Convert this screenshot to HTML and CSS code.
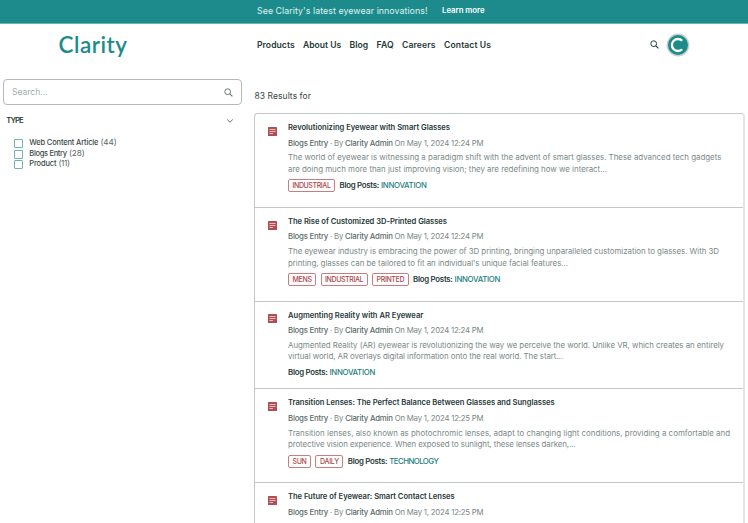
FILE: index.html
```html
<!DOCTYPE html>
<html lang="en">
<head>
<meta charset="utf-8">
<title>Clarity</title>
<link rel="stylesheet" href="styles.css">
</head>
<body>
<svg class="defs" width="0" height="0">
  <symbol id="search" viewBox="0 0 10 10"><circle cx="4.1" cy="4.1" r="3.2" fill="none" stroke="currentColor" stroke-width="1.1"/><path d="M6.4 6.4 9.4 9.4" fill="none" stroke="currentColor" stroke-width="1.2"/></symbol>
  <symbol id="entry" viewBox="0 0 9 9"><rect width="9" height="9" rx=".6" fill="#b04f53"/><path d="M1.5 2.5h6M1.5 4.5h6M1.5 6.5h3.5" stroke="#f3dcdd" stroke-width=".8"/></symbol>
</svg>
<div class="banner"><span data-w="170.5">See Clarity's latest eyewear innovations!</span><a class="more" data-w="42.5">Learn more</a></div>
<header class="header">
  <div class="logo"><span data-w="69">Clarity</span></div>
  <nav class="nav"><a data-w="37.7">Products</a><a data-w="38">About Us</a><a data-w="18.7">Blog</a><a data-w="17">FAQ</a><a data-w="33.7">Careers</a><a data-w="47">Contact Us</a></nav>
  <svg class="find"><use href="#search"/></svg>
  <svg class="avatar" viewBox="0 0 24 24"><circle cx="12" cy="12" r="11.4" fill="#c9cdcd"/><circle cx="12" cy="12" r="10" fill="#1d8b8b"/><path d="M16.2 7.8A6 6 0 1 0 16.2 16.2" fill="none" stroke="#fff" stroke-width="2.3"/></svg>
</header>
<main class="page">
  <aside class="side">
    <div class="search"><span data-w="35.5">Search...</span><svg><use href="#search"/></svg></div>
    <div class="facet"><span data-w="16.5">TYPE</span><svg viewBox="0 0 8 6"><path d="M1.2 1.5 4 4.2 6.8 1.5" fill="none" stroke="#526060" stroke-width=".9"/></svg></div>
    <ul class="options">
      <li><i></i><b data-w="69">Web Content Article</b><span data-w="16">(44)</span></li>
      <li><i></i><b data-w="37.5">Blogs Entry</b><span data-w="15.5">(28)</span></li>
      <li><i></i><b data-w="27">Product</b><span data-w="11">(11)</span></li>
    </ul>
  </aside>
  <section class="results">
    <div class="count"><span data-w="56.5">83 Results for</span></div>
    <div class="list">
      <article class="item">
        <svg class="icon"><use href="#entry"/></svg>
        <div>
          <h2><span data-w="162">Revolutionizing Eyewear with Smart Glasses</span></h2>
          <p class="meta"><span data-w="195.3"><b>Blogs Entry</b> · By <b>Clarity Admin</b> On May 1, 2024 12:24 PM</span></p>
          <p class="text"><span data-w="433.3">The world of eyewear is witnessing a paradigm shift with the advent of smart glasses. These advanced tech gadgets</span><br><span data-w="319">are doing much more than just improving vision; they are redefining how we interact...</span></p>
          <div class="tags"><a class="tag"><span data-w="38">INDUSTRIAL</span></a><span class="cat"><span data-w="39.5">Blog Posts:</span><a data-w="45.5">INNOVATION</a></span></div>
        </div>
      </article>
      <article class="item">
        <svg class="icon"><use href="#entry"/></svg>
        <div>
          <h2><span data-w="159">The Rise of Customized 3D-Printed Glasses</span></h2>
          <p class="meta"><span data-w="195.3"><b>Blogs Entry</b> · By <b>Clarity Admin</b> On May 1, 2024 12:24 PM</span></p>
          <p class="text"><span data-w="431">The eyewear industry is embracing the power of 3D printing, bringing unparalleled customization to glasses. With 3D</span><br><span data-w="280">printing, glasses can be tailored to fit an individual's unique facial features...</span></p>
          <div class="tags"><a class="tag"><span data-w="19.1">MENS</span></a><a class="tag"><span data-w="38">INDUSTRIAL</span></a><a class="tag"><span data-w="27.5">PRINTED</span></a><span class="cat"><span data-w="39.5">Blog Posts:</span><a data-w="45.5">INNOVATION</a></span></div>
        </div>
      </article>
      <article class="item plain">
        <svg class="icon"><use href="#entry"/></svg>
        <div>
          <h2><span data-w="135.3">Augmenting Reality with AR Eyewear</span></h2>
          <p class="meta"><span data-w="195.3"><b>Blogs Entry</b> · By <b>Clarity Admin</b> On May 1, 2024 12:24 PM</span></p>
          <p class="text"><span data-w="436">Augmented Reality (AR) eyewear is revolutionizing the way we perceive the world. Unlike VR, which creates an entirely</span><br><span data-w="275">virtual world, AR overlays digital information onto the real world. The start...</span></p>
          <div class="tags"><span class="cat"><span data-w="39.5">Blog Posts:</span><a data-w="45.5">INNOVATION</a></span></div>
        </div>
      </article>
      <article class="item">
        <svg class="icon"><use href="#entry"/></svg>
        <div>
          <h2><span data-w="266.7">Transition Lenses: The Perfect Balance Between Glasses and Sunglasses</span></h2>
          <p class="meta"><span data-w="195.3"><b>Blogs Entry</b> · By <b>Clarity Admin</b> On May 1, 2024 12:25 PM</span></p>
          <p class="text"><span data-w="442">Transition lenses, also known as photochromic lenses, adapt to changing light conditions, providing a comfortable and</span><br><span data-w="287.5">protective vision experience. When exposed to sunlight, these lenses darken,...</span></p>
          <div class="tags"><a class="tag"><span data-w="14">SUN</span></a><a class="tag"><span data-w="18.8">DAILY</span></a><span class="cat"><span data-w="39.5">Blog Posts:</span><a data-w="49">TECHNOLOGY</a></span></div>
        </div>
      </article>
      <article class="item">
        <svg class="icon"><use href="#entry"/></svg>
        <div>
          <h2><span data-w="166.7">The Future of Eyewear: Smart Contact Lenses</span></h2>
          <p class="meta"><span data-w="195.3"><b>Blogs Entry</b> · By <b>Clarity Admin</b> On May 1, 2024 12:25 PM</span></p>
        </div>
      </article>
    </div>
  </section>
</main>
<script src="fit.js"></script>
</body>
</html>
```
FILE: styles.css
```css
* { box-sizing: border-box; }
body { margin: 0; height: 523px; overflow: hidden; background: #fff; color: #263838; font: 7.7px/12px Inter, "Liberation Sans", sans-serif; }
h2, p, ul { margin: 0; padding: 0; font-size: inherit; }
svg { display: block; flex: none; }
b { font-weight: 550; }
[data-w] { display: inline-block; white-space: nowrap; }
.defs { position: absolute; }
.banner { height: 24px; padding: 4px 0 0 257px; display: flex; gap: 14.5px; background: #1d8b8b; border-bottom: 1px solid #69b3b3; color: #dff1f1; font-size: 8.8px; line-height: 13px; }
.more { color: #fff; font-weight: 600; font-size: 7.8px; }
.header { height: 55px; padding-top: 9px; display: flex; align-items: flex-start; }
.logo { width: 198px; padding-left: 58.5px; color: #1d8b8b; font: 600 22.5px/24px Lato, sans-serif; }
.nav { width: 393px; padding-left: 59px; display: flex; gap: 8.4px; font-size: 8.6px; font-weight: 600; line-height: 24px; }
.find { width: 9px; height: 9px; margin: 7px 0 0 59.4px; color: #263838; }
.avatar { width: 24px; height: 24px; margin-left: 6.6px; }
.page { display: flex; }
.side { width: 254px; padding-left: 3px; }
.search { width: 239px; height: 26px; padding: 0 8px; border: 1px solid #b3baba; border-radius: 4px; display: flex; align-items: center; justify-content: space-between; color: #a4adad; font-size: 8.6px; }
.search svg { width: 9px; height: 9px; color: #657272; }
.facet { width: 239px; padding: 10px 8px 0 3.3px; display: flex; align-items: center; justify-content: space-between; font-weight: 600; font-size: 7.7px; line-height: 12px; }
.facet svg { width: 8px; height: 6px; }
.options { padding: 10px 0 0 11px; list-style: none; color: #596666; line-height: 11.6px; }
.options li { display: flex; height: 10.7px; font-size: 8.2px; }
.options b { margin-right: 2.2px; color: #394949; font-size: 7.5px; }
.options i { width: 9px; height: 9px; margin: 2px 6.3px 0 0; border: 1px solid #72b2b2; border-radius: 1px; }
.results { width: 491px; }
.count { height: 34px; padding: 10.5px 0 0 .5px; font-size: 8.5px; color: #394949; }
.list { height: 430px; border: 1px solid #c2c8c8; border-right: 2px solid #e3e5e5; border-radius: 4px 4px 0 0; overflow: hidden; }
.item { height: 93.9px; padding: 8px 0 0 13.3px; display: flex; border-bottom: 1px solid #c2c8c8; }
.item.plain { height: 87.3px; }
.icon { width: 9px; height: 9px; margin: 4.7px 10.7px 0 0; }
.item h2 { font-size: 7.6px; font-weight: 600; line-height: 12px; }
.meta { margin-top: 2.6px; color: #7a8787; font-size: 7.8px; }
.meta b { color: #5d6b6b; }
.text { margin-top: 3.9px; color: #7b8988; font-size: 7.9px; line-height: 11.2px; }
.tags { height: 13px; margin-top: 4.6px; display: flex; gap: 4.5px; line-height: 12px; }
.plain .tags { margin-top: 3px; }
.tag { height: 13px; padding: 0 3.5px; border: 1px solid #c97d80; border-radius: 2px; color: #b04449; font-size: 7px; font-weight: 550; line-height: 11px; }
.cat { display: flex; gap: 2px; font-size: 7.8px; font-weight: 600; }
.cat a { color: #1d8080; font-weight: 550; }
```
FILE: fit.js
```js
// Track each label so that it fills its set width.
document.querySelectorAll('[data-w]').forEach(function (el) {
  var n = el.textContent.length;
  var gap = (Number(el.dataset.w) - el.getBoundingClientRect().width) / n;
  el.style.letterSpacing = gap + 'px';
});
```
